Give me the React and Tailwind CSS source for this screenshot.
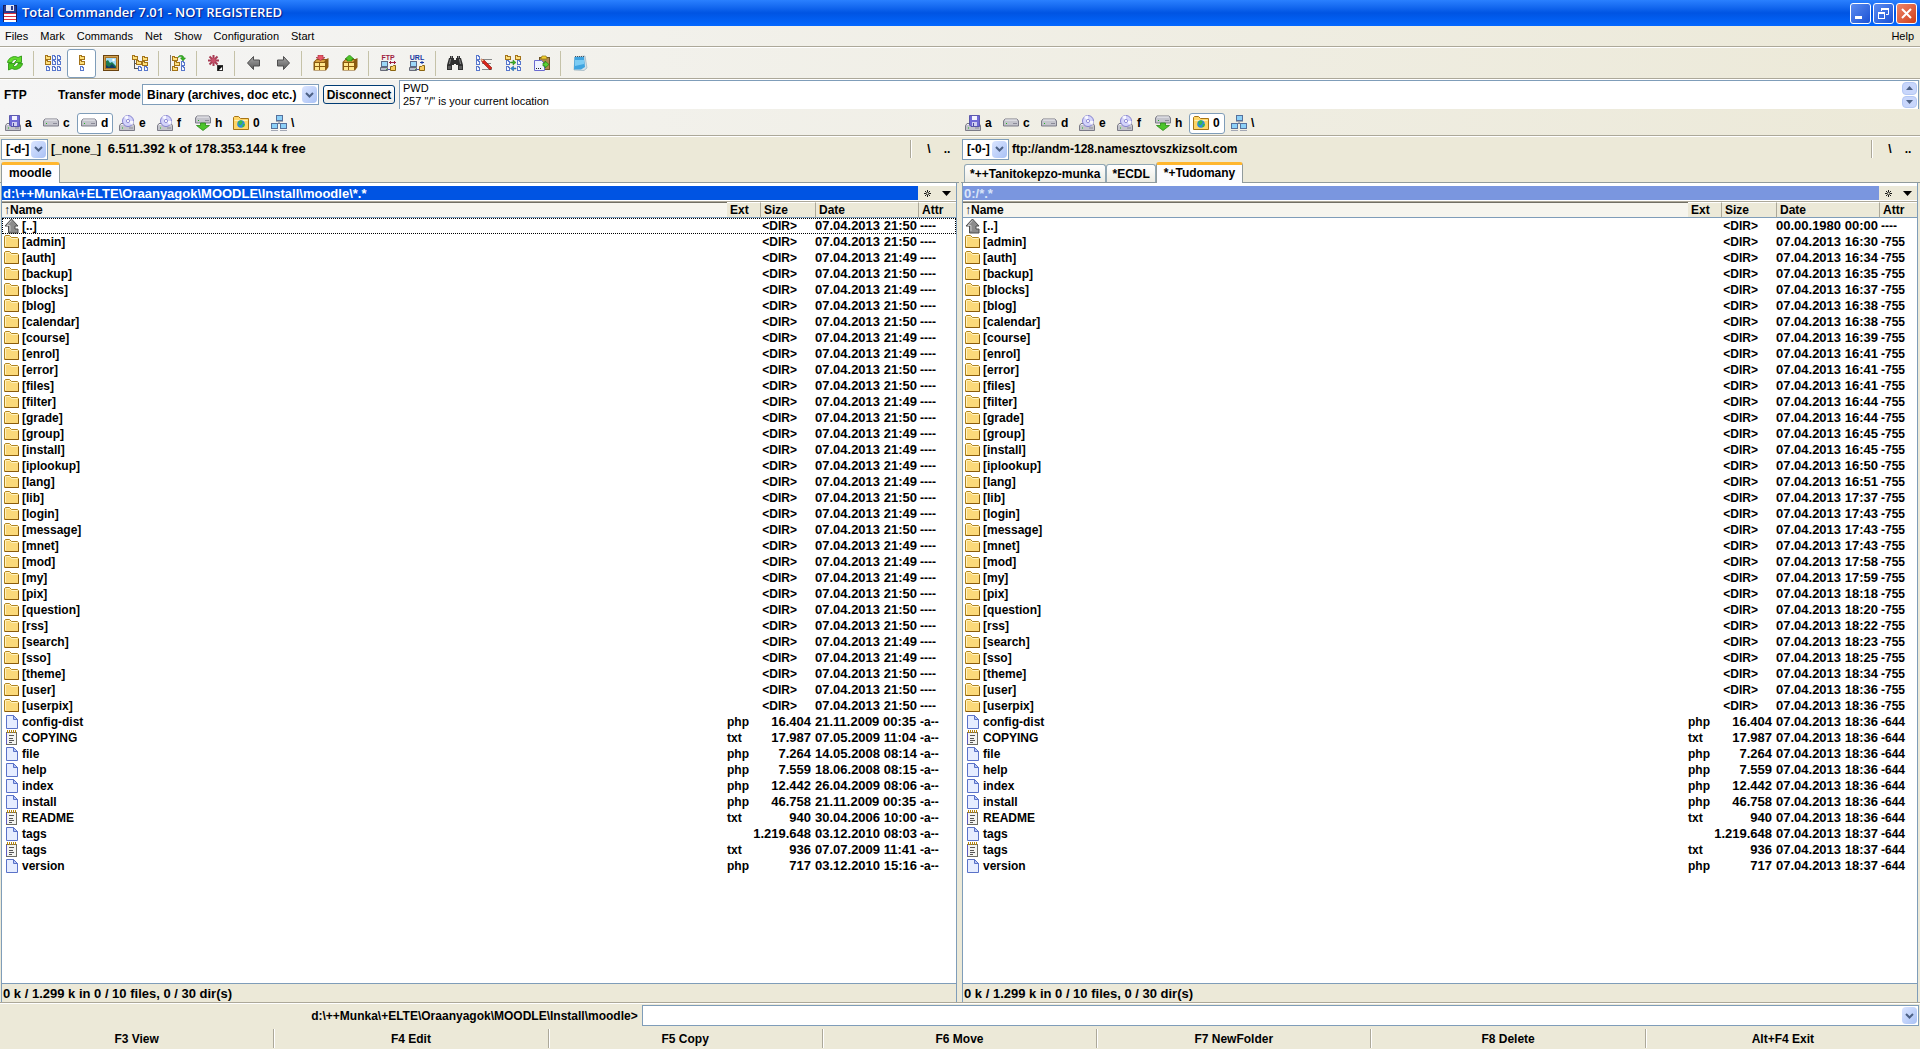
import React from "react";

/* ---------- icon building blocks ---------- */

const Svg = ({ children, w = 16, h = 16 }) => (
  <svg width={w} height={h} viewBox={`0 0 ${w} ${h}`} className="block shrink-0" aria-hidden="true">
    {children}
  </svg>
);

const Fold = ({ x, y }) => (
  <g shapeRendering="crispEdges">
    <path d={`M${x} ${y}h3v1h3v4h-6z`} fill="#a3731a" />
    <path d={`M${x + 1} ${y + 1}h1v1h3v2h-4z`} fill="#ffe07a" />
  </g>
);

const Page = ({ x, y }) => (
  <g shapeRendering="crispEdges">
    <path d={`M${x} ${y}h3v1h1v4h-4z`} fill="#5877cc" />
    <path d={`M${x + 1} ${y + 1}h1v1h1v2h-2z`} fill="#f4f7ff" />
  </g>
);

const RefreshIcon = () => (
  <Svg>
    <path d="M0.500 7.500C1 3 7 0 11 2.500L14.500 1v6.500H7.500l2.500-2.500C8 4 5.500 4.500 5 7.500z" fill="#62dc2c" stroke="#2f9a16" strokeWidth="0.900" />
    <path d="M15.500 8.500c-.5 4.500-6.500 7.500-10.500 5L1.500 15V8.500h7L6 11c2 1 4.500.5 5-2.500z" fill="#4cc81f" stroke="#2f9a16" strokeWidth="0.900" />
  </Svg>
);
const BriefIcon = () => (
  <Svg>
    <Fold x={0} y={0} /><Page x={7} y={0} /><Page x={12} y={0} />
    <Fold x={0} y={5} /><Page x={7} y={5} /><Page x={12} y={5} />
    <Page x={1} y={11} /><Page x={7} y={11} /><Page x={12} y={11} />
  </Svg>
);
const FullIcon = () => (
  <Svg><Fold x={5} y={0} /><Fold x={5} y={5} /><Page x={6} y={11} /></Svg>
);
const ThumbsIcon = () => (
  <Svg>
    <rect x="0.500" y="0.500" width="15" height="15" fill="#a87428" stroke="#6b4410" />
    <rect x="1.500" y="1.500" width="13" height="13" fill="none" stroke="#d0a050" />
    <rect x="3" y="3" width="10" height="10" fill="#a4dcf8" />
    <path d="M3 13V6l2-1 2 3 2-1 4 4v2z" fill="#1d7a52" />
    <path d="M3 13v-3l3 2 3-3 4 4z" fill="#123c66" />
    <circle cx="10.500" cy="5" r="1.300" fill="#fff" />
  </Svg>
);
const TreeIcon = () => (
  <Svg>
    <path d="M2.500 5v9M2.500 8.500H5M2.500 13.500H6" stroke="#555" fill="none" shapeRendering="crispEdges" />
    <Fold x={0} y={0} /><Fold x={4} y={5} /><Fold x={10} y={1} /><Fold x={10} y={6} /><Page x={6} y={11} /><Page x={12} y={11} />
  </Svg>
);
const BranchIcon = () => (
  <Svg>
    <path d="M0.500 0v16" stroke="#777" shapeRendering="crispEdges" />
    <Fold x={2} y={1} /><Fold x={4} y={6} /><Fold x={2} y={11} /><Page x={11} y={6} /><Page x={11} y={11} />
    <path d="M8 2.500c1-3 5.500-3 6 .5h1.500L13 6 10.500 3H12c0-1.500-2-2-4-.5z" fill="#36b322" stroke="#1d7e12" strokeWidth="0.500" />
  </Svg>
);
const InvertIcon = () => (
  <Svg>
    <path d="M5.500 0v11M0 5.500h11M1.500 1.500l8 8M9.500 1.500l-8 8" stroke="#a83c54" strokeWidth="2" />
    <circle cx="5.500" cy="5.500" r="2.400" fill="#c8506a" />
    <rect x="9.500" y="10.500" width="5" height="5" fill="#fff" stroke="#333" />
    <path d="M10 11h5l-5 5z" fill="#111" />
  </Svg>
);
const ArrowIcon = ({ flip }) => (
  <Svg>
    <defs>
      <linearGradient id={flip ? "arR" : "arL"} x1="0" y1="0" x2="0" y2="1">
        <stop offset="0" stopColor="#a8a8a8" /><stop offset="1" stopColor="#5a5a5a" />
      </linearGradient>
    </defs>
    <path
      d={flip ? "M14.500 8L8.500 1.500v3.500H2.500v6h6v3.500z" : "M1.500 8l6-6.500v3.500h6v6h-6v3.500z"}
      fill={flip ? "url(#arR)" : "url(#arL)"} stroke="#4e4e4e"
    />
  </Svg>
);
const PackIcon = ({ out }) => (
  <Svg>
    <path d="M0.500 7l3-3h10l2-1v9l-2.500 3.500H0.500z" fill="#8a5a10" />
    <path d="M3.500 5h9l-1.500 2H2z" fill="#d8a040" />
    <path d="M2 8h4v3H2zM7 8h5v3H7zM2 12h4v3H2zM7 12h5v3H7z" fill="#ffe68c" />
    {out ? (
      <path d="M7.500 0l4.500 4h-2v2H5V4H3z" fill="#4fc42a" stroke="#237a10" strokeWidth="0.600" />
    ) : (
      <path d="M7.500 5.500l4.500-3h-2V0H5v2.500H3z" fill="#e85868" stroke="#a02838" strokeWidth="0.600" />
    )}
  </Svg>
);
const NetLabelIcon = ({ label, color, both }) => (
  <Svg w={18} h={18}>
    <text x="9" y="6" textAnchor="middle" fontSize="7" fontWeight="700" fontFamily="Liberation Sans, sans-serif" fill={color}>{label}</text>
    <rect x="2.500" y="7.500" width="6" height="5" fill="#9cd8f8" stroke="#5a6a88" />
    <path d="M1.500 13.500h7v3h-7z" fill="#b8bcc8" stroke="#666a78" />
    <path d="M9 15.500h3" stroke="#5050b0" /><path d="M7 15.500h1" stroke="#30b030" />
    <path d="M11.500 12.500h2l1-1h2v5h-5z" fill="#f8cc60" stroke="#8a6410" />
    <path d={both ? "M10 8.500h7M11.500 7v3M15.500 7v3" : "M12 8.500h4M14 7v3"} stroke={color} />
  </Svg>
);
const SearchIcon = () => (
  <Svg>
    <path d="M3 1h3v2h1v2h2V3h1V1h3v2h1l2 7v5h-5v-5H9V9H7v1H5v5H0v-5l2-7h1z" fill="#303030" />
    <path d="M1 11h3v3H1zM12 11h3v3h-3z" fill="#5a5a5a" />
    <path d="M3.500 4l-1 5M12.500 4l1 5M4.500 1v2M11.500 1v2" stroke="#8a8a8a" />
  </Svg>
);
const RenameIcon = () => (
  <Svg>
    <Page x={0} y={0} /><Page x={0} y={5} /><Page x={0} y={11} />
    <path d="M6 4.500h10M6 8.500h9M6 14.500h10" stroke="#888" shapeRendering="crispEdges" />
    <path d="M5 4l3 1 8 8-2 2-8-8z" fill="#d82418" stroke="#7c120c" strokeWidth="0.600" />
    <path d="M5 4l1 2.500L8 5z" fill="#f4d8a0" />
  </Svg>
);
const SyncIcon = () => (
  <Svg>
    <Fold x={0} y={0} /><Fold x={10} y={0} /><Page x={1} y={5} /><Page x={12} y={5} /><Page x={1} y={11} /><Page x={12} y={11} />
    <path d="M5.500 7H8V5l3 2.500L8 10V8H5.500z" fill="#3cb426" stroke="#237a10" strokeWidth="0.500" />
    <path d="M11 13H8.500v-2L5.500 13.500l3 2.500v-2H11z" fill="#2e8cd8" stroke="#1c5c98" strokeWidth="0.500" />
  </Svg>
);
const CopyNamesIcon = () => (
  <Svg>
    <rect x="5.500" y="2.500" width="10" height="12" fill="#b08a50" stroke="#6e5428" />
    <path d="M7 3l1-2h4l1 2v1H7z" fill="#f4d030" stroke="#8a7010" strokeWidth="0.700" />
    <path d="M0.500 5.500h7l3 3v7h-10z" fill="#eef2ff" stroke="#6a6ad0" />
    <path d="M2 13.500h1m1 0h1m1 0h1" stroke="#222" />
    <path d="M9 8h2V6l4 3.500-4 3.500v-2H9z" fill="#58d038" stroke="#1f7e12" strokeWidth="0.700" />
  </Svg>
);
const NotepadIcon = () => (
  <Svg>
    <path d="M3 2l10-1 2 12-3 2.500L2 15z" fill="#d4e2ea" stroke="#8aa4b4" strokeWidth="0.600" />
    <path d="M2.500 2h9.500l1 10-4 2.500H2z" fill="#3fa4e0" />
    <path d="M3 5h9v4l-9 2z" fill="#7cccf4" />
    <path d="M3 1.500h10" stroke="#456" strokeDasharray="1 1" />
  </Svg>
);

const Drive = ({ y = 7 }) => (
  <g>
    <path d={`M2 ${y}h12l1.500 2v5H0.500v-5z`} fill="#c4c4cc" stroke="#70707e" strokeWidth="0.900" />
    <path d={`M2 ${y + 1}h12`} stroke="#f0f0f4" />
    <path d={`M3 ${y + 4.5}h1`} stroke="#18b818" />
    <path d={`M10 ${y + 4.5}h4`} stroke="#8a8a98" />
  </g>
);
const DriveIcon = ({ kind }) => {
  switch (kind) {
    case "floppy":
      return (
        <Svg>
          <Drive y={8.5} />
          <path d="M5 0.500h9.500v11H6L4.500 10V0.500z" fill="#6f6ad6" stroke="#4844a0" strokeWidth="0.800" />
          <rect x="7" y="1" width="5" height="4" fill="#f4f4ff" /><rect x="7" y="7" width="5" height="4" fill="#cfcff0" />
          <rect x="8" y="8" width="1" height="3" fill="#4844a0" />
        </Svg>
      );
    case "cd":
      return (
        <Svg>
          <Drive y={8.5} />
          <circle cx="9" cy="6" r="5.500" fill="#d4d4fa" stroke="#7c78cc" strokeWidth="0.900" />
          <path d="M9 6L5 2a5.500 5.500 0 0 1 4-1.500zM9 6l4 4a5.500 5.500 0 0 0 1.500-4z" fill="#f8f8ff" />
          <circle cx="9" cy="6" r="1.600" fill="#fff" stroke="#7c78cc" strokeWidth="0.800" />
        </Svg>
      );
    case "net":
      return (
        <Svg>
          <Drive y={1} />
          <path d="M5.500 8h5v2.500h4L8 15.500 1.500 10.500h4z" fill="#4cc42c" stroke="#2a8a18" strokeWidth="0.800" />
        </Svg>
      );
    case "ftp":
      return (
        <Svg>
          <path d="M0.500 14.500v-12l1-1h4l2 2h8v11z" fill="#ffd668" stroke="#a87414" />
          <path d="M1.500 5.500h13" stroke="#fff0b0" />
          <circle cx="8" cy="9" r="3.800" fill="#2c8ce0" />
          <path d="M5 7l3-2 2 2-2 3-2 0zM10 9l2 0-1 3-2 0z" fill="#3cb84c" />
        </Svg>
      );
    case "lan":
      return (
        <Svg>
          <path d="M8 6v3M3 11V8.500h10V11" stroke="#6a7a98" fill="none" />
          <rect x="5.500" y="0.500" width="6" height="5" fill="#8cd0f8" stroke="#56719c" />
          <rect x="0.500" y="8.500" width="6" height="5" fill="#8cd0f8" stroke="#56719c" />
          <rect x="9.500" y="8.500" width="6" height="5" fill="#8cd0f8" stroke="#56719c" />
          <path d="M0 15.500h7M9 15.500h7M5 6.500h7" stroke="#a4a8b4" />
        </Svg>
      );
    default:
      return <Svg><Drive y={4} /></Svg>;
  }
};

const RowIcon = ({ kind }) => {
  if (kind === "up")
    return (
      <Svg>
        <path d="M7.500 1L14 8h-3v3h3v4H4.500V8H1z" fill="#8c8c8c" stroke="#4c4c4c" />
        <path d="M7.500 2.500L3 7.500h3V13" stroke="#c8c8c8" fill="none" />
      </Svg>
    );
  if (kind === "dir")
    return (
      <Svg>
        <path d="M0.500 13.500v-11l1-1h4l2 2h6l1 1v9z" fill="#fbd97a" stroke="#b08420" />
        <path d="M1.500 12V3l1-.5h3l2 2h6" stroke="#fff3c0" fill="none" />
        <path d="M1 13.500h13.500V5" stroke="#8a5c0c" fill="none" />
      </Svg>
    );
  if (kind === "txt")
    return (
      <Svg>
        <rect x="2.500" y="2.500" width="10" height="12" fill="#f4f4f0" stroke="#6c6c64" />
        <path d="M2.500 3v11" stroke="#5c5cc0" />
        <path d="M3 1.500h9" stroke="#b8860b" strokeDasharray="1 1" strokeWidth="3" />
        <path d="M5 5.500h5M5 8.500h4M5 10.500h5M5 12.500h3" stroke="#555" />
      </Svg>
    );
  return (
    <Svg>
      <path d="M2.500 1.500h7l4 4v9h-11z" fill="#e6edff" stroke="#5a72c8" />
      <path d="M9.500 1.500v4h4z" fill="#b8c8f8" stroke="#5a72c8" />
    </Svg>
  );
};

const Chevron = () => (
  <span className="flex w-[15px] items-center justify-center rounded-sm bg-gradient-to-br from-[#dbe5ff] to-[#a9c1f5]">
    <svg width="9" height="6" viewBox="0 0 9 6" aria-hidden="true">
      <path d="M1 1l3.500 3.500L8 1" fill="none" stroke="#4d6185" strokeWidth="2" />
    </svg>
  </span>
);

/* ---------- data ---------- */

const dirs = [
  ["admin", "50", "16:30"], ["auth", "49", "16:34"], ["backup", "50", "16:35"], ["blocks", "49", "16:37"],
  ["blog", "50", "16:38"], ["calendar", "50", "16:38"], ["course", "49", "16:39"], ["enrol", "49", "16:41"],
  ["error", "50", "16:41"], ["files", "50", "16:41"], ["filter", "49", "16:44"], ["grade", "50", "16:44"],
  ["group", "49", "16:45"], ["install", "49", "16:45"], ["iplookup", "49", "16:50"], ["lang", "49", "16:51"],
  ["lib", "50", "17:37"], ["login", "49", "17:43"], ["message", "50", "17:43"], ["mnet", "49", "17:43"],
  ["mod", "49", "17:58"], ["my", "49", "17:59"], ["pix", "50", "18:18"], ["question", "50", "18:20"],
  ["rss", "50", "18:22"], ["search", "49", "18:23"], ["sso", "49", "18:25"], ["theme", "50", "18:34"],
  ["user", "50", "18:36"], ["userpix", "50", "18:36"],
];
const files = [
  ["config-dist", "php", "16.404", "21.11.2009 00:35", "18:36"],
  ["COPYING", "txt", "17.987", "07.05.2009 11:04", "18:36"],
  ["file", "php", "7.264", "14.05.2008 08:14", "18:36"],
  ["help", "php", "7.559", "18.06.2008 08:15", "18:36"],
  ["index", "php", "12.442", "26.04.2009 08:06", "18:36"],
  ["install", "php", "46.758", "21.11.2009 00:35", "18:36"],
  ["README", "txt", "940", "30.04.2006 10:00", "18:36"],
  ["tags", "", "1.219.648", "03.12.2010 08:03", "18:37"],
  ["tags", "txt", "936", "07.07.2009 11:41", "18:37"],
  ["version", "php", "717", "03.12.2010 15:16", "18:37"],
];

const rowsFor = (remote) => [
  { icon: "up", name: "[..]", ext: "", size: "<DIR>", date: remote ? "00.00.1980 00:00" : "07.04.2013 21:50", attr: "----" },
  ...dirs.map(([n, l, r]) => ({
    icon: "dir", name: `[${n}]`, ext: "", size: "<DIR>",
    date: remote ? `07.04.2013 ${r}` : `07.04.2013 21:${l}`, attr: remote ? "-755" : "----",
  })),
  ...files.map(([n, e, s, l, r]) => ({
    icon: e === "txt" ? "txt" : "file", name: n, ext: e, size: s,
    date: remote ? `07.04.2013 ${r}` : l, attr: remote ? "-644" : "-a--",
  })),
];

const drives = [
  ["a", "floppy"], ["c", "hdd"], ["d", "hdd"], ["e", "cd"], ["f", "cd"], ["h", "net"], ["0", "ftp"], ["\\", "lan"],
];

const toolbar = [
  [["Refresh", <RefreshIcon />]],
  [["Brief", <BriefIcon />], ["Full", <FullIcon />, true], ["Thumbnails", <ThumbsIcon />], ["Tree", <TreeIcon />]],
  [["Branch view", <BranchIcon />]],
  [["Invert selection", <InvertIcon />]],
  [["Back", <ArrowIcon />], ["Forward", <ArrowIcon flip />]],
  [["Pack", <PackIcon />], ["Unpack", <PackIcon out />]],
  [["FTP connect", <NetLabelIcon label="FTP" color="#a02040" both />], ["FTP new URL", <NetLabelIcon label="URL" color="#1838a0" />]],
  [["Search", <SearchIcon />], ["Multi-rename", <RenameIcon />], ["Synchronize", <SyncIcon />], ["Copy names", <CopyNamesIcon />]],
  [["Notepad", <NotepadIcon />]],
];

/* ---------- pieces ---------- */

const Rule = () => <div className="h-[2px] shrink-0 border-t border-[#aca899] bg-white" />;

function DriveBar({ active }) {
  return (
    <div className="flex min-w-0 flex-1 items-center gap-[2px] pl-px">
      {drives.map(([letter, kind]) => (
        <button
          key={letter}
          type="button"
          className={
            letter === active
              ? "flex h-[21px] w-9 items-center gap-1 rounded-[3px] border border-[#7f9db9] bg-white pl-[3px]"
              : "flex h-[21px] w-9 items-center gap-1 pl-1"
          }
        >
          <DriveIcon kind={kind} />
          {letter}
        </button>
      ))}
    </div>
  );
}

function Combo({ label, value, className }) {
  return (
    <span className={className}>
      <select aria-label={label} className="min-w-0 flex-1 appearance-none bg-white pl-[3px] outline-none" defaultValue={value}>
        <option>{value}</option>
      </select>
      <Chevron />
    </span>
  );
}

function FilePanel({ label, drive, info, tabs, activeTab, path, pathClass, remote }) {
  return (
    <section aria-label={label} className="flex min-w-0 flex-1 flex-col">
      <div className="flex h-6 items-center pl-px">
        <Combo
          label="Drive" value={drive}
          className="flex h-[21px] w-[47px] shrink-0 border border-[#7f9db9] bg-white p-px"
        />
        <span className="ml-[3px] whitespace-pre">{info}</span>
        <span className="ml-auto flex items-center pr-[6px]">
          <span className="mr-[9px] h-[18px] w-[2px] border-l border-[#aca899] bg-white" />
          <button type="button" className="w-4">\</button>
          <button type="button" className="ml-1 w-3">..</button>
        </span>
      </div>
      <div className={remote ? "flex h-[22px] items-end border-b border-[#919b9c] pl-[3px]" : "flex h-[22px] items-end border-b border-[#919b9c] pl-px"}>
        {tabs.map((t) =>
          t === activeTab ? (
            <button key={t} type="button" className="-mb-px h-[21px] rounded-t-[3px] border-x border-t-[3px] border-x-[#919b9c] border-t-[#ffb62e] bg-[#fcfcfe] px-[7px] pb-[2px]">
              {t}
            </button>
          ) : (
            <button key={t} type="button" className="h-[18px] rounded-t-[3px] border border-b-0 border-[#91a7b4] bg-gradient-to-b from-white to-[#ecebe2] px-[5px]">
              {t}
            </button>
          )
        )}
      </div>
      <div className="ml-px mr-[2px] flex min-h-0 flex-1 flex-col border-x border-[#7f9db9]">
        <div className="flex h-[19px] border-b border-[#aca899] bg-white pb-px pt-[3px]">
          <div className={pathClass}>{path}</div>
          <div className="flex w-[38px] items-center justify-around bg-[#ece9d8]">
            <button type="button" aria-label="Favorites">
              <svg width="9" height="9" viewBox="0 0 9 9" aria-hidden="true" className="block">
                <path d="M4.500 1v7M1 4.500h7M2 2l5 5M7 2L2 7" stroke="#000" strokeWidth="0.900" />
                <rect x="3.500" y="3.500" width="2" height="2" fill="#ece9d8" />
              </svg>
            </button>
            <button type="button" aria-label="History">
              <svg width="9" height="5" viewBox="0 0 9 5" aria-hidden="true" className="block"><path d="M0 0h9L4.500 5z" /></svg>
            </button>
          </div>
        </div>
        <div className="min-h-0 flex-1 overflow-hidden border-b border-[#7f9db9] bg-white">
          <table className="w-full table-fixed border-separate border-spacing-0 text-left">
            <colgroup>
              <col />
              <col className="w-[33px]" />
              <col className="w-[55px]" />
              <col className="w-[103px]" />
              <col className="w-[38px]" />
            </colgroup>
            <thead className="bg-[#ece9d8] leading-[14px]">
              <tr>
                <th className="border-b border-t border-b-[#7f9db9] border-t-[#716f64] bg-[#f6f5ee] p-0 pl-[2px]">↑Name</th>
                <th className="border-b border-t border-b-[#7f9db9] border-t-white p-0 pl-[3px]">Ext</th>
                <th className="border-b border-l border-t border-b-[#7f9db9] border-l-[#aca899] border-t-white p-0 pl-[3px]">Size</th>
                <th className="border-b border-l border-t border-b-[#7f9db9] border-l-[#aca899] border-t-white p-0 pl-[3px]">Date</th>
                <th className="border-b border-l border-t border-b-[#7f9db9] border-l-[#aca899] border-t-white p-0 pl-[3px]">Attr</th>
              </tr>
            </thead>
            <tbody className="leading-4">
              {rowsFor(remote).map((r, i) => (
                <tr key={i} className={i === 0 && !remote ? "h-4 outline-1 -outline-offset-1 outline-dotted outline-black" : "h-4"}>
                  <td className="p-0">
                    <span className="flex h-4 items-center gap-[2px] overflow-hidden pl-[2px]">
                      <RowIcon kind={r.icon} />
                      {r.name}
                    </span>
                  </td>
                  <td className="p-0">{r.ext}</td>
                  <td className="p-0">
                    <span className={r.size === "<DIR>" ? "flex justify-end pr-[18px]" : "flex justify-end pr-1 text-[13px] leading-4"}>
                      {r.size}
                    </span>
                  </td>
                  <td className="whitespace-nowrap p-0 text-[13px] leading-4">{r.date}</td>
                  <td className="p-0 pl-[2px]">{r.attr}</td>
                </tr>
              ))}
            </tbody>
          </table>
        </div>
        <div className="flex h-[18px] items-center pl-px pt-px text-[13px]">0 k / 1.299 k in 0 / 10 files, 0 / 30 dir(s)</div>
      </div>
    </section>
  );
}

const titleBtn = "flex h-[21px] w-[21px] items-center justify-center rounded-[3px] border border-white bg-gradient-to-br from-[#5c8cf0] to-[#1a50d4]";

export default function App() {
  return (
    <div className="flex h-screen flex-col overflow-hidden bg-[#ece9d8] font-['Liberation_Sans',Arial,sans-serif] text-xs font-bold text-black">
      <header className="flex h-[26px] shrink-0 items-center bg-gradient-to-b from-[#2a80ff] via-[#0054e3] to-[#0468ff] px-[3px]">
        <Svg w={14} h={17}>
          <rect x="0.500" y="0.500" width="13" height="16" fill="#2a3c90" stroke="#16205c" />
          <rect x="3" y="0" width="8" height="6" fill="#e4e8f4" /><rect x="8" y="1" width="2" height="4" fill="#2a3c90" />
          <rect x="1" y="8" width="12" height="9" fill="#fff" />
          <path d="M1 8.500h12M1 11.500h12M1 14.500h12" stroke="#d83040" />
        </Svg>
        <h1 className="ml-[5px] font-['Open_Sans',sans-serif] text-[13px] font-semibold text-white [text-shadow:1px_1px_1px_#0a1883]">
          Total Commander 7.01 - NOT REGISTERED
        </h1>
        <div className="ml-auto flex gap-[2px]">
          <button type="button" aria-label="Minimize" className={titleBtn}>
            <svg width="13" height="13" aria-hidden="true"><rect x="1" y="9" width="7" height="3" fill="#fff" /></svg>
          </button>
          <button type="button" aria-label="Restore" className={titleBtn}>
            <svg width="13" height="13" aria-hidden="true" fill="none" stroke="#fff">
              <path d="M4.500 4V1.500h7v6H9" /><path d="M4 2h8" strokeWidth="2" /><rect x="1.500" y="5.500" width="6" height="6" /><path d="M1 6h7" strokeWidth="2" />
            </svg>
          </button>
          <button type="button" aria-label="Close" className="flex h-[21px] w-[21px] items-center justify-center rounded-[3px] border border-white bg-gradient-to-br from-[#ec8468] to-[#d03c10]">
            <svg width="13" height="13" aria-hidden="true"><path d="M2 2l9 9M11 2l-9 9" stroke="#fff" strokeWidth="2" /></svg>
          </button>
        </div>
      </header>

      <div className="shrink-0 bg-gradient-to-r from-[#f5f5f5] to-[#ece9d8]">
        <nav className="flex h-5 items-center gap-3 px-[5px] text-[11px] font-normal">
          {["Files", "Mark", "Commands", "Net", "Show", "Configuration", "Start"].map((m) => (
            <button key={m} type="button">{m}</button>
          ))}
          <button type="button" className="ml-auto pr-px">Help</button>
        </nav>
        <Rule />
        <div role="toolbar" aria-label="Commands" className="flex h-[30px] items-center">
          {toolbar.map((group, gi) => (
            <React.Fragment key={gi}>
              {gi > 0 && <span className="mx-1 h-[25px] w-px bg-[#c5c2a8]" />}
              {group.map(([name, icon, on]) => (
                <button
                  key={name}
                  type="button"
                  aria-label={name}
                  aria-pressed={!!on}
                  className={
                    on
                      ? "flex h-[29px] w-[29px] items-center justify-center rounded-[3px] border border-[#7f9db9] bg-white"
                      : "flex h-[29px] w-[29px] items-center justify-center"
                  }
                >
                  {icon}
                </button>
              ))}
            </React.Fragment>
          ))}
        </div>
        <Rule />
        <div className="flex h-[29px] items-center pl-1 pr-px">
          <span className="w-[54px]">FTP</span>
          <span className="w-[84px] whitespace-nowrap">Transfer mode</span>
          <Combo
            label="Transfer mode" value="Binary (archives, doc etc.)"
            className="flex h-[21px] w-[177px] shrink-0 border border-[#7f9db9] bg-white p-px"
          />
          <button type="button" className="ml-1 h-[19px] w-[72px] shrink-0 rounded-[3px] border border-[#003c74] bg-gradient-to-b from-white to-[#ecebe6]">
            Disconnect
          </button>
          <div className="ml-1 flex h-full min-w-0 flex-1 border border-b-0 border-[#7f9db9] bg-white">
            <textarea
              aria-label="FTP log"
              readOnly
              className="block h-full min-w-0 flex-1 resize-none overflow-hidden bg-white pl-[3px] pt-px text-[11px] font-normal leading-[13px] outline-none"
              defaultValue={'PWD\n257 "/" is your current location'}
            />
            <div className="flex w-[17px] flex-col gap-px p-px">
              <button type="button" aria-label="Scroll up" className="flex flex-1 items-center justify-center rounded-sm border border-[#b4c8f4] bg-[#c8d6fb]">
                <svg width="7" height="4" aria-hidden="true"><path d="M0 4l3.500-4L7 4z" fill="#4d6185" /></svg>
              </button>
              <button type="button" aria-label="Scroll down" className="flex flex-1 items-center justify-center rounded-sm border border-[#b4c8f4] bg-[#c8d6fb]">
                <svg width="7" height="4" aria-hidden="true"><path d="M0 0l3.500 4L7 0z" fill="#4d6185" /></svg>
              </button>
            </div>
          </div>
        </div>
        <div className="flex h-[26px] items-center pt-[2px]">
          <DriveBar active="d" />
          <DriveBar active="0" />
        </div>
        <Rule />
      </div>

      <main className="flex min-h-0 flex-1 gap-[2px]">
        <FilePanel
          label="Left panel"
          drive="[-d-]"
          info={<>[_none_]{"  "}<span className="text-[13px]">6.511.392 k of 178.353.144 k free</span></>}
          tabs={["moodle"]}
          activeTab="moodle"
          path="d:\++Munka\+ELTE\Oraanyagok\MOODLE\Install\moodle\*.*"
          pathClass="flex min-w-0 flex-1 items-center overflow-hidden bg-[#0054e3] pl-px text-[13px] leading-none text-white"
        />
        <FilePanel
          label="Right panel"
          drive="[-0-]"
          info="ftp://andm-128.namesztovszkizsolt.com"
          tabs={["*++Tanitokepzo-munka", "*ECDL", "*+Tudomany"]}
          activeTab="*+Tudomany"
          path="0:/*.*"
          pathClass="flex min-w-0 flex-1 items-center overflow-hidden bg-[#7a96df] pl-px text-[13px] leading-none text-[#d8e4f8]"
          remote
        />
      </main>

      <footer className="shrink-0">
        <Rule />
        <div className="flex h-[23px] items-center pr-px">
          <label htmlFor="cmdline" className="w-1/3 pr-[2px] text-right">
            d:\++Munka\+ELTE\Oraanyagok\MOODLE\Install\moodle&gt;
          </label>
          <div className="ml-[2px] flex h-[21px] min-w-0 flex-1 border border-[#7f9db9] bg-white p-px">
            <input id="cmdline" type="text" className="min-w-0 flex-1 bg-white px-1 outline-none" />
            <Chevron />
          </div>
        </div>
        <div className="grid h-[22px] grid-cols-7 pt-px">
          {["F3 View", "F4 Edit", "F5 Copy", "F6 Move", "F7 NewFolder", "F8 Delete", "Alt+F4 Exit"].map((k) => (
            <button key={k} type="button" className="my-px border-r border-[#aca899] shadow-[1px_0_0_#fff] last:border-r-0 last:shadow-none">{k}</button>
          ))}
        </div>
      </footer>
    </div>
  );
}
